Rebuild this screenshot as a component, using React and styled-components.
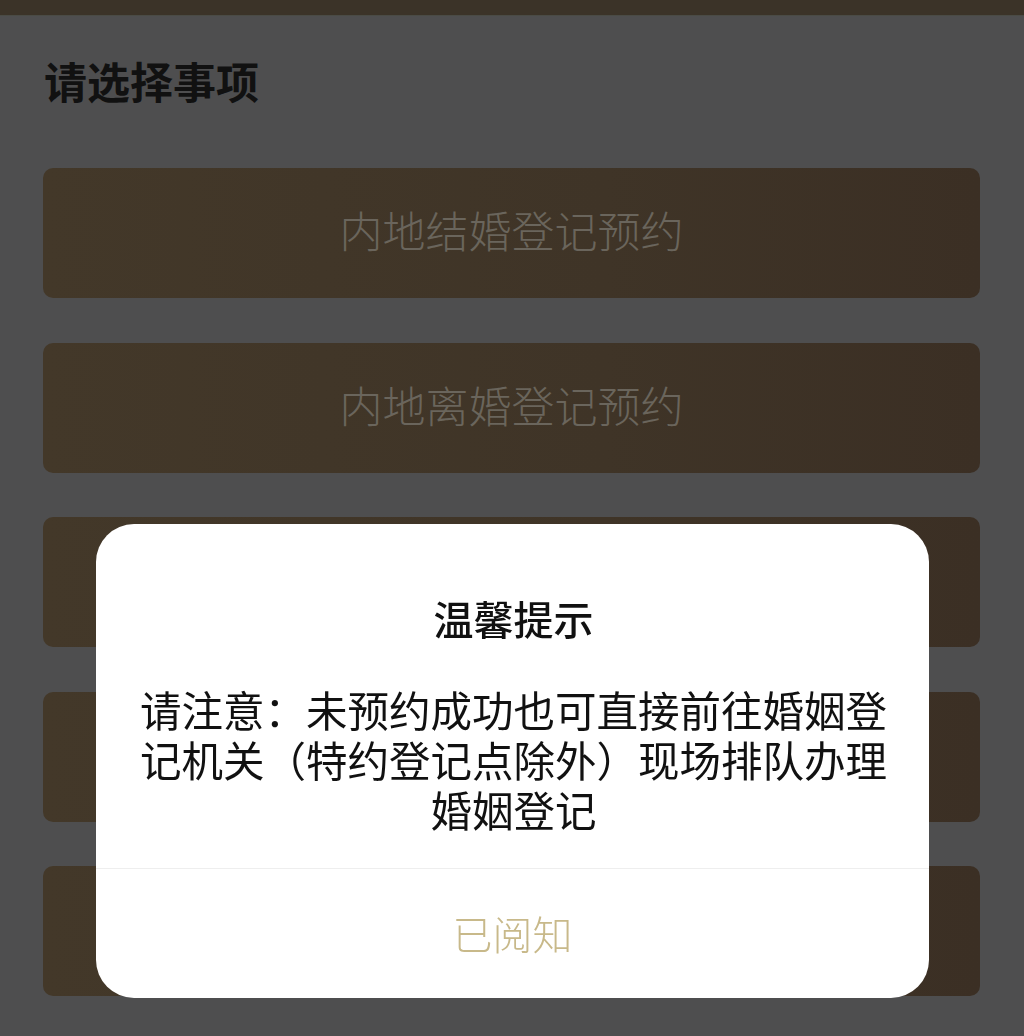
import React from 'react'
import styled, { createGlobalStyle } from 'styled-components'

const GlobalStyle = createGlobalStyle`
  html, body {
    margin: 0;
    padding: 0;
    background: #4e4e4f;
    font-family: "Noto Sans CJK SC", "Noto Sans", sans-serif;
  }
`

const Page = styled.div`
  width: 1024px;
  height: 1036px;
  background: #4e4e4f;
  overflow: hidden;
  display: flex;
  flex-direction: column;
`

const TopBar = styled.div`
  height: 15px;
  background: #3b3328;
  border-bottom: 1px solid #4a4b45;
`

const Content = styled.div`
  padding: 42px 44px 0 43px;
  display: flex;
  flex-direction: column;
`

const Title = styled.h1`
  margin: 0 0 66px 1px;
  font-size: 43px;
  line-height: 44px;
  font-weight: 700;
  color: #111;
`

const List = styled.div`
  display: flex;
  flex-direction: column;
  gap: 44.5px;
`

const Item = styled.div`
  height: 130px;
  padding-bottom: 8px;
  box-sizing: border-box;
  border-radius: 10px;
  background: linear-gradient(90deg, #433829 0%, #3f3427 60%, #3b2f24 100%);
  display: flex;
  align-items: center;
  justify-content: center;
  font-size: 43px;
  font-weight: 300;
  color: #6a655c;
`

const Dialog = styled.div`
  position: fixed;
  top: 524px;
  left: 96px;
  width: 833px;
  height: 474px;
  background: #fff;
  border-radius: 38px;
  display: flex;
  flex-direction: column;
  overflow: hidden;
`

const DialogBody = styled.div`
  padding: 74px 38px 34px 40px;
  display: flex;
  flex-direction: column;
  align-items: center;
  text-align: center;
  border-bottom: 1px solid #eeeeee;
`

const DialogTitle = styled.div`
  font-size: 40px;
  line-height: 40px;
  font-weight: 500;
  color: #111;
  margin-bottom: 46px;
`

const DialogText = styled.div`
  font-size: 41.5px;
  line-height: 50px;
  color: #111;
`

const DialogButton = styled.div`
  flex: 1;
  display: flex;
  align-items: center;
  justify-content: center;
  padding-bottom: 2px;
  font-size: 40px;
  font-weight: 300;
  color: #c8b98a;
`

const items = [
  '内地结婚登记预约',
  '内地离婚登记预约',
  '',
  '',
  '',
]

export default function App() {
  return (
    <>
      <GlobalStyle />
      <Page>
        <TopBar />
        <Content>
          <Title>请选择事项</Title>
          <List>
            {items.map((text, i) => (
              <Item key={i}>{text}</Item>
            ))}
          </List>
        </Content>
      </Page>
      <Dialog>
        <DialogBody>
          <DialogTitle>温馨提示</DialogTitle>
          <DialogText>
            请注意：未预约成功也可直接前往婚姻登记机关（特约登记点除外）现场排队办理婚姻登记
          </DialogText>
        </DialogBody>
        <DialogButton>已阅知</DialogButton>
      </Dialog>
    </>
  )
}
